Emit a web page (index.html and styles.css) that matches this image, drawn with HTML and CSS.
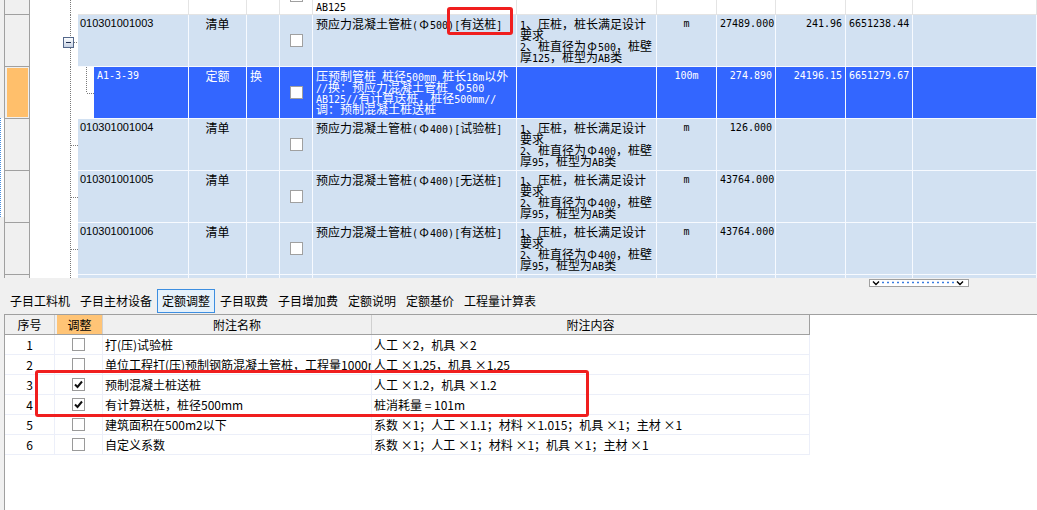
FILE: index.html
```html
<!DOCTYPE html>
<html lang="zh-CN">
<head>
<meta charset="utf-8">
<title>定额调整</title>
<link rel="stylesheet" href="styles.css">
</head>
<body>
<div class="top">
  <div class="edge"><div class="edge-a"></div><div class="edge-b"></div><div class="edge-c"></div></div>
  <div class="grid">
    <div class="row first">
      <div class="rh"></div>
      <div class="tree"><svg width="48" height="15"><line class="dot" x1="40.5" y1="0" x2="40.5" y2="15"/></svg></div>
      <div class="c w1"></div><div class="c w2"></div><div class="c w3"></div>
      <div class="c w4 chk top-chk"><span class="box"></span></div>
      <div class="c w5 ab"><span class="h">AB125</span></div>
      <div class="c w6"></div><div class="c w7"></div><div class="c w8"></div><div class="c w9"></div><div class="c w10"></div><div class="c w11"></div>
    </div>

    <div class="row bill">
      <div class="rh"></div>
      <div class="tree"><svg width="48" height="52">
        <line class="dot" x1="40.5" y1="0" x2="40.5" y2="22"/>
        <line class="dot" x1="40.5" y1="33" x2="40.5" y2="52"/>
        <line class="dot" x1="44" y1="27.5" x2="48" y2="27.5"/>
        <defs><linearGradient id="tg" x1="0" y1="0" x2="0" y2="1"><stop offset="0" stop-color="#ffffff"/><stop offset="1" stop-color="#c3cfe2"/></linearGradient></defs>
        <rect x="33.5" y="22.5" width="10" height="10" fill="url(#tg)" stroke="#53678a"/>
        <line x1="36" y1="27.5" x2="41" y2="27.5" stroke="#1f2f52" stroke-width="1" shape-rendering="crispEdges"/>
      </svg></div>
      <div class="c w1 code">010301001003</div>
      <div class="c w2 ctr">清单</div>
      <div class="c w3"></div>
      <div class="c w4 chk"><span class="box"></span></div>
      <div class="c w5">预应力混凝土管桩<span class="h">(</span><span class="phi">Φ</span><span class="h">500)[</span>有送桩<span class="h">]</span></div>
      <div class="c w6"><span class="h">1</span>、压桩，桩长满足设计<br>要求<br><span class="h">2</span>、桩直径为<span class="phi">Φ</span><span class="h">500</span>，桩壁<br>厚<span class="h">125</span>，桩型为<span class="h">AB</span>类</div>
      <div class="c w7 ctr num">m</div>
      <div class="c w8 rt num">27489.000</div>
      <div class="c w9 rt num">241.96</div>
      <div class="c w10 rt num">6651238.44</div>
      <div class="c w11"></div>
    </div>

    <div class="row sel">
      <div class="rh"><div class="mark"></div></div>
      <div class="tree wide"><svg width="64" height="52">
        <line class="dot" x1="40.5" y1="0" x2="40.5" y2="52"/>
        <line class="dot" x1="56.5" y1="0" x2="56.5" y2="26"/>
        <line class="dot" x1="57" y1="26.5" x2="64" y2="26.5"/>
      </svg></div>
      <div class="c w1s num">A1-3-39</div>
      <div class="c w2 ctr">定额</div>
      <div class="c w3">换</div>
      <div class="c w4 chk"><span class="box"></span></div>
      <div class="c w5">压预制管桩<span class="h"> </span>桩径<span class="h">500mm </span>桩长<span class="h">18m</span>以外<br><span class="h">//</span>换：预应力混凝土管桩<span class="h"> </span><span class="phi">Φ</span><span class="h">500</span><br><span class="h">AB125//</span>有计算送桩，桩径<span class="h">500mm//</span><br>调：预制混凝土桩送桩</div>
      <div class="c w6"></div>
      <div class="c w7 ctr num">100m</div>
      <div class="c w8 rt num">274.890</div>
      <div class="c w9 rt num">24196.15</div>
      <div class="c w10 rt num">6651279.67</div>
      <div class="c w11"></div>
    </div>

    <div class="row bill">
      <div class="rh"></div>
      <div class="tree"><svg width="48" height="52"><line class="dot" x1="40.5" y1="0" x2="40.5" y2="52"/><line class="dot" x1="41" y1="26.5" x2="48" y2="26.5"/></svg></div>
      <div class="c w1 code">010301001004</div>
      <div class="c w2 ctr">清单</div>
      <div class="c w3"></div>
      <div class="c w4 chk"><span class="box"></span></div>
      <div class="c w5">预应力混凝土管桩<span class="h">(</span><span class="phi">Φ</span><span class="h">400)[</span>试验桩<span class="h">]</span></div>
      <div class="c w6"><span class="h">1</span>、压桩，桩长满足设计<br>要求<br><span class="h">2</span>、桩直径为<span class="phi">Φ</span><span class="h">400</span>，桩壁<br>厚<span class="h">95</span>，桩型为<span class="h">AB</span>类</div>
      <div class="c w7 ctr num">m</div>
      <div class="c w8 rt num">126.000</div>
      <div class="c w9"></div>
      <div class="c w10"></div>
      <div class="c w11"></div>
    </div>

    <div class="row bill">
      <div class="rh"></div>
      <div class="tree"><svg width="48" height="52"><line class="dot" x1="40.5" y1="0" x2="40.5" y2="52"/><line class="dot" x1="41" y1="26.5" x2="48" y2="26.5"/></svg></div>
      <div class="c w1 code">010301001005</div>
      <div class="c w2 ctr">清单</div>
      <div class="c w3"></div>
      <div class="c w4 chk"><span class="box"></span></div>
      <div class="c w5">预应力混凝土管桩<span class="h">(</span><span class="phi">Φ</span><span class="h">400)[</span>无送桩<span class="h">]</span></div>
      <div class="c w6"><span class="h">1</span>、压桩，桩长满足设计<br>要求<br><span class="h">2</span>、桩直径为<span class="phi">Φ</span><span class="h">400</span>，桩壁<br>厚<span class="h">95</span>，桩型为<span class="h">AB</span>类</div>
      <div class="c w7 ctr num">m</div>
      <div class="c w8 rt num">43764.000</div>
      <div class="c w9"></div>
      <div class="c w10"></div>
      <div class="c w11"></div>
    </div>

    <div class="row bill">
      <div class="rh"></div>
      <div class="tree"><svg width="48" height="52"><line class="dot" x1="40.5" y1="0" x2="40.5" y2="52"/><line class="dot" x1="41" y1="26.5" x2="48" y2="26.5"/></svg></div>
      <div class="c w1 code">010301001006</div>
      <div class="c w2 ctr">清单</div>
      <div class="c w3"></div>
      <div class="c w4 chk"><span class="box"></span></div>
      <div class="c w5">预应力混凝土管桩<span class="h">(</span><span class="phi">Φ</span><span class="h">400)[</span>有送桩<span class="h">]</span></div>
      <div class="c w6"><span class="h">1</span>、压桩，桩长满足设计<br>要求<br><span class="h">2</span>、桩直径为<span class="phi">Φ</span><span class="h">400</span>，桩壁<br>厚<span class="h">95</span>，桩型为<span class="h">AB</span>类</div>
      <div class="c w7 ctr num">m</div>
      <div class="c w8 rt num">43764.000</div>
      <div class="c w9"></div>
      <div class="c w10"></div>
      <div class="c w11"></div>
    </div>

    <div class="row bill">
      <div class="rh"></div>
      <div class="tree"><svg width="48" height="52"><line class="dot" x1="40.5" y1="0" x2="40.5" y2="52"/><line class="dot" x1="41" y1="26.5" x2="48" y2="26.5"/></svg></div>
      <div class="c w1 code">010301001007</div>
      <div class="c w2 ctr">清单</div>
      <div class="c w3"></div>
      <div class="c w4 chk"><span class="box"></span></div>
      <div class="c w5">送桩<span class="h">(</span><span class="phi">Φ</span><span class="h">500)</span></div>
      <div class="c w6"><span class="h">1</span>、压桩，送桩</div>
      <div class="c w7 ctr num">m</div>
      <div class="c w8 rt num">1230.000</div>
      <div class="c w9"></div>
      <div class="c w10"></div>
      <div class="c w11"></div>
    </div>
  </div>
</div>

<div class="strip">
  <div class="hscroll"><svg width="100" height="8">
    <rect x="0.5" y="0.5" width="99" height="7" fill="#fff" stroke="#a0a0a0"/>
    <path d="M4 2.5 L7 5.5 L10 2.5" fill="none" stroke="#000" stroke-width="1.4"/>
    <path d="M88 2.5 L91 5.5 L94 2.5" fill="none" stroke="#000" stroke-width="1.4"/>
    <line x1="13" y1="3.5" x2="85" y2="3.5" stroke="#3b7de0" stroke-dasharray="2 3" stroke-width="1.5"/>
  </svg></div>
</div>

<div class="tabs">
  <div class="tab">子目工料机</div>
  <div class="tab">子目主材设备</div>
  <div class="tab active">定额调整</div>
  <div class="tab">子目取费</div>
  <div class="tab">子目增加费</div>
  <div class="tab">定额说明</div>
  <div class="tab">定额基价</div>
  <div class="tab">工程量计算表</div>
</div>

<div class="panel">
  <div class="thead">
    <div class="th t1">序号</div>
    <div class="th t2"><span class="adj">调整</span></div>
    <div class="th t3">附注名称</div>
    <div class="th t4">附注内容</div>
  </div>
  <div class="tr">
    <div class="td t1 ctr">1</div>
    <div class="td t2 cb"><span class="cbox"></span></div>
    <div class="td t3">打(压)试验桩</div>
    <div class="td t4">人工 ×2，机具 ×2</div>
  </div>
  <div class="tr">
    <div class="td t1 ctr">2</div>
    <div class="td t2 cb"><span class="cbox"></span></div>
    <div class="td t3">单位工程打(压)预制钢筋混凝土管桩，工程量1000m以内</div>
    <div class="td t4">人工 ×1.25，机具 ×1.25</div>
  </div>
  <div class="tr">
    <div class="td t1 ctr">3</div>
    <div class="td t2 cb"><span class="cbox"><svg width="11" height="11"><path d="M2 5.5 L4.5 8 L9 2.5" fill="none" stroke="#111" stroke-width="2"/></svg></span></div>
    <div class="td t3">预制混凝土桩送桩</div>
    <div class="td t4">人工 ×1.2，机具 ×1.2</div>
  </div>
  <div class="tr">
    <div class="td t1 ctr">4</div>
    <div class="td t2 cb"><span class="cbox"><svg width="11" height="11"><path d="M2 5.5 L4.5 8 L9 2.5" fill="none" stroke="#111" stroke-width="2"/></svg></span></div>
    <div class="td t3">有计算送桩，桩径500mm</div>
    <div class="td t4">桩消耗量 = 101m</div>
  </div>
  <div class="tr">
    <div class="td t1 ctr">5</div>
    <div class="td t2 cb"><span class="cbox"></span></div>
    <div class="td t3">建筑面积在500m2以下</div>
    <div class="td t4">系数 ×1；人工 ×1.1；材料 ×1.015；机具 ×1；主材 ×1</div>
  </div>
  <div class="tr">
    <div class="td t1 ctr">6</div>
    <div class="td t2 cb"><span class="cbox"></span></div>
    <div class="td t3">自定义系数</div>
    <div class="td t4">系数 ×1；人工 ×1；材料 ×1；机具 ×1；主材 ×1</div>
  </div>
</div>

<div class="callout callout-top"></div>
<div class="callout callout-bottom"></div>
</body>
</html>
```

FILE: styles.css
```css
* { box-sizing: border-box; }
html, body { margin: 0; padding: 0; }
body {
  width: 1037px;
  height: 510px;
  overflow: hidden;
  position: relative;
  background: #f0f0f0;
  color: #000;
  font-family: "Noto Sans CJK SC", "Noto Sans", sans-serif;
  font-size: 12px;
}

/* ---------- top grid ---------- */
.top { display: flex; height: 278px; overflow: hidden; background: #fff; }
.edge { width: 4px; flex: none; display: flex; flex-direction: column; background: #f0f0f0; }
.edge-a { height: 118px; }
.edge-b { height: 99px; background: #fff; border-left: 1px dotted #4a8fe0; }
.edge-c { flex: 1; }

.grid { flex: 1; display: flex; flex-direction: column; }
.row { display: flex; height: 52px; flex: none; }
.row.first { height: 15px; }

.rh {
  width: 26px; flex: none;
  background: #f0f0f0;
  border-left: 1px solid #a0a0a0;
  border-right: 1px solid #a0a0a0;
  border-bottom: 1px solid #a0a0a0;
  padding: 1px 1px 1px 2px;
}
.rh .mark { height: 100%; background: #ffbf6b; }

.tree { width: 48px; flex: none; background: #fff; }
.tree.wide { width: 64px; }
.tree svg { display: block; }
.dot { stroke: #7a7a7a; stroke-width: 1; stroke-dasharray: 1 1; shape-rendering: crispEdges; }

.c {
  flex: none;
  overflow: hidden;
  white-space: nowrap;
  padding: 3px 3px 0;
  line-height: 11px;
  border-right: 1px solid #f7faff;
  border-bottom: 1px solid #f7faff;
}
.bill .c { background: #d2e1f2; }
.sel .c { background: #3366ff; color: #fff; }
.first .c { background: #fff; border-color: #e4e4e4; }
.first .ab { padding-top: 0; line-height: 12px; }

/* half-width Latin runs, SimSun-like 6px advance */
.h {
  font-family: "DejaVu Sans Mono", monospace;
  font-size: 10px;
  line-height: 0;
  white-space: pre;
}
.phi { display: inline-block; width: 12px; text-align: center; line-height: 0; }

.w1 { width: 111px; }
.w1s { width: 95px; }
.w2 { width: 58px; }
.w3 { width: 33px; }
.w4 { width: 33px; }
.w5 { width: 204px; }
.w6 { width: 140px; }
.w7 { width: 60px; }
.w8 { width: 59px; }
.w9 { width: 70px; }
.w10 { width: 67px; }
.w11 { flex: 1; }

.ctr { text-align: center; }
.rt { text-align: right; }
.code { font-family: "Liberation Sans", sans-serif; font-size: 11px; padding-left: 2px; }
.num { font-family: "DejaVu Sans Mono", monospace; font-size: 10px; }

.chk { display: flex; align-items: center; justify-content: center; padding: 0; }
.top-chk { align-items: flex-start; }
.top-chk .box { margin-top: -11px; }
.box { width: 13px; height: 13px; background: #fff; border: 1px solid #a0a0a0; display: block; }

/* ---------- bottom area ---------- */
.strip { height: 10px; display: flex; justify-content: flex-end; padding: 1px 68px 0 0; }
.hscroll svg { display: block; }

.tabs { height: 26px; display: flex; align-items: center; padding-left: 5px; }
.tab {
  height: 24px;
  padding: 0 4px;
  display: flex; align-items: center;
  border: 1px solid transparent;
  line-height: 1;
  white-space: nowrap;
}
.tab.active { border-color: #3d8ee0; background: #e5f1fb; }

.panel {
  height: 196px;
  margin-left: 4px;
  background: #fff;
  border-left: 1px solid #a0a0a0;
  border-top: 1px solid #a0a0a0;
}
.thead {
  display: flex;
  width: 805px;
  height: 20px;
  background: #f0f0f0;
  border-bottom: 1px solid #a0a0a0;
  border-right: 1px solid #a0a0a0;
}
.th {
  display: flex; align-items: center; justify-content: center;
  border-right: 1px solid #d0d0d0;
}
.th.t4 { border-right: none; }
.th.t2 { padding-left: 2px; justify-content: stretch; }
.adj { flex: 1; height: 100%; background: #ffc476; display: flex; align-items: center; justify-content: center; }

.t1 { width: 50px; flex: none; }
.t2 { width: 48px; flex: none; }
.t3 { width: 269px; flex: none; }
.t4 { flex: 1; }

.tr {
  display: flex;
  width: 805px;
  height: 20px;
  border-bottom: 1px solid #eceff9;
  border-right: 1px solid #eceff9;
}
.td {
  border-right: 1px solid #eceff9;
  line-height: 19px;
  overflow: hidden;
  white-space: nowrap;
  padding-left: 2px;
}
.td.t4 { border-right: none; }
.td.t1 { padding-left: 0; }
.cb { display: flex; align-items: center; justify-content: center; padding-left: 0; }
.cbox {
  width: 13px; height: 13px;
  border: 1px solid #9a9a9a;
  background: #fff;
  display: block;
}
.cbox svg { display: block; }

/* ---------- annotation callouts ---------- */
.callout {
  position: absolute;
  border: 3px solid #f01e1e;
  border-radius: 3px;
}
.callout-top { left: 447px; top: 7px; width: 66px; height: 28px; }
.callout-bottom { left: 35px; top: 370px; width: 554px; height: 47px; }
```
